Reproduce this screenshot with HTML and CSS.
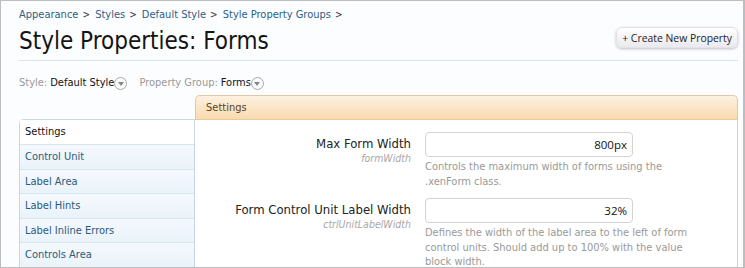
FILE: index.html
```html
<!DOCTYPE html>
<html>
<head>
<meta charset="utf-8">
<link rel="stylesheet" href="styles.css">
</head>
<body>
<div class="page">
  <nav class="crumbs">
    <a>Appearance</a><span class="sep">&gt;</span>
    <a>Styles</a><span class="sep">&gt;</span>
    <a>Default Style</a><span class="sep">&gt;</span>
    <a>Style Property Groups</a><span class="sep">&gt;</span>
  </nav>
  <div class="titlebar">
    <h1>Style Properties: Forms</h1>
    <button class="btn">+ Create New Property</button>
  </div>
  <div class="filters">
    <span class="flabel">Style:</span> <span class="fval">Default Style</span><span class="dd"></span>
    <span class="flabel gap">Property Group:</span> <span class="fval">Forms</span><span class="dd"></span>
  </div>
  <div class="panel">
    <ul class="side">
      <li class="active">Settings</li>
      <li>Control Unit</li>
      <li>Label Area</li>
      <li>Label Hints</li>
      <li>Label Inline Errors</li>
      <li>Controls Area</li>
    </ul>
    <div class="main">
      <div class="tabhead">Settings</div>
      <div class="body">
        <div class="row">
          <div class="lbl">
            <div class="name">Max Form Width</div>
            <div class="hint">formWidth</div>
          </div>
          <div class="ctrl">
            <div class="input">800px</div>
            <p class="desc">Controls the maximum width of forms using the .xenForm class.</p>
          </div>
        </div>
        <div class="row">
          <div class="lbl">
            <div class="name">Form Control Unit Label Width</div>
            <div class="hint">ctrlUnitLabelWidth</div>
          </div>
          <div class="ctrl">
            <div class="input">32%</div>
            <p class="desc">Defines the width of the label area to the left of form control units. Should add up to 100% with the value block width.</p>
          </div>
        </div>
      </div>
    </div>
  </div>
</div>
</body>
</html>
```

FILE: styles.css
```css
* { box-sizing: border-box; }
html, body { margin: 0; padding: 0; }
body {
  width: 745px;
  height: 268px;
  overflow: hidden;
  background: #fff;
  font-family: "DejaVu Sans Condensed", "DejaVu Sans", sans-serif;
  font-size: 11px;
}
.page {
  width: 745px;
  height: 268px;
  border: 1px solid #bdbdbd;
  border-right-width: 2px;
  background: #fcfdff;
  padding: 7px 5px 0 18px;
  overflow: hidden;
}
.crumbs {
  height: 14px;
  line-height: 14px;
  font-size: 11px;
}
.crumbs a { color: #2d5d84; }
.crumbs .sep { color: #333; margin: 0 2px 0 4px; font-size: 10px; }
.titlebar {
  display: flex;
  justify-content: space-between;
  align-items: flex-start;
  border-bottom: 1px solid #dbe6ef;
  height: 39px;
}
h1 {
  margin: 5px 0 0 0;
  font-size: 24px;
  font-weight: normal;
  color: #141414;
  line-height: 28px;
}
.btn {
  margin-top: 5px;
  height: 21px;
  padding: 0 5px;
  border: 1px solid #e3e3e6;
  border-radius: 6px;
  background: linear-gradient(#ffffff, #e9e9ef);
  box-shadow: 0 1px 3px rgba(0,0,0,0.25);
  font-family: "Open Sans", "Noto Sans", sans-serif;
  font-size: 10.4px;
  color: #222;
}
.filters {
  height: 34px;
  padding-top: 10px;
  line-height: 14px;
  display: flex;
  align-items: center;
}
.flabel { color: #999; margin-right: 3px; }
.flabel.gap { margin-left: 12px; }
.fval { color: #111; }
.dd {
  display: inline-block;
  width: 13px;
  height: 13px;
  border: 1px solid #aaa;
  border-radius: 50%;
  margin-left: 0;
  position: relative;
  background: #fafafa;
}
.dd::after {
  content: "";
  position: absolute;
  left: 2.5px;
  top: 4px;
  border-left: 3.5px solid transparent;
  border-right: 3.5px solid transparent;
  border-top: 4px solid #888;
}
.panel {
  display: flex;
}
.side {
  list-style: none;
  margin: 24px 0 0 0;
  padding: 0;
  width: 176px;
  flex: none;
  border: 1px solid #c6d7e5;
  border-bottom: none;
  border-radius: 5px 0 0 0;
  background: #fff;
}
.side li {
  height: 24.5px;
  line-height: 24px;
  padding-left: 5px;
  color: #2b5a7e;
  background: linear-gradient(#f5f9fd, #eaf3fa);
  border-top: 1px solid #d7e5f0;
}
.side li.active {
  background: #fff;
  color: #111;
  border-top: none;
  height: 24px;
}
.main {
  flex: 1;
  display: flex;
  flex-direction: column;
}
.tabhead {
  height: 25px;
  line-height: 23px;
  padding-left: 10px;
  border: 1px solid #ddc9a9;
  border-bottom: 1px solid #eccb9a;
  border-radius: 5px 5px 0 0;
  background: linear-gradient(#fdf1e0, #f9dab0);
  color: #5b4121;
  font-size: 11px;
}
.body {
  border-right: 1px solid #cfcfcf;
  background: #fff;
  padding-top: 12px;
  height: 200px;
}
.row {
  display: flex;
  margin-bottom: 9px;
}
.lbl {
  width: 216px;
  text-align: right;
  flex: none;
}
.name {
  font-size: 13px;
  color: #222;
  line-height: 16px;
  padding-top: 4px;
}
.hint {
  font-size: 10.5px;
  font-style: italic;
  color: #a8a8a8;
  line-height: 12px;
}
.ctrl {
  margin-left: 14px;
  width: 270px;
}
.input {
  width: 208px;
  height: 25px;
  border: 1px solid #d3d3d3;
  border-radius: 4px;
  background: #fff;
  text-align: right;
  padding-right: 5px;
  line-height: 23px;
  font-family: "Open Sans", "Noto Sans", sans-serif;
  font-size: 11.5px;
  color: #111;
}
.desc {
  margin: 3px 0 0 0;
  color: #999;
  line-height: 14.5px;
  font-size: 11px;
  width: 268px;
}
```
